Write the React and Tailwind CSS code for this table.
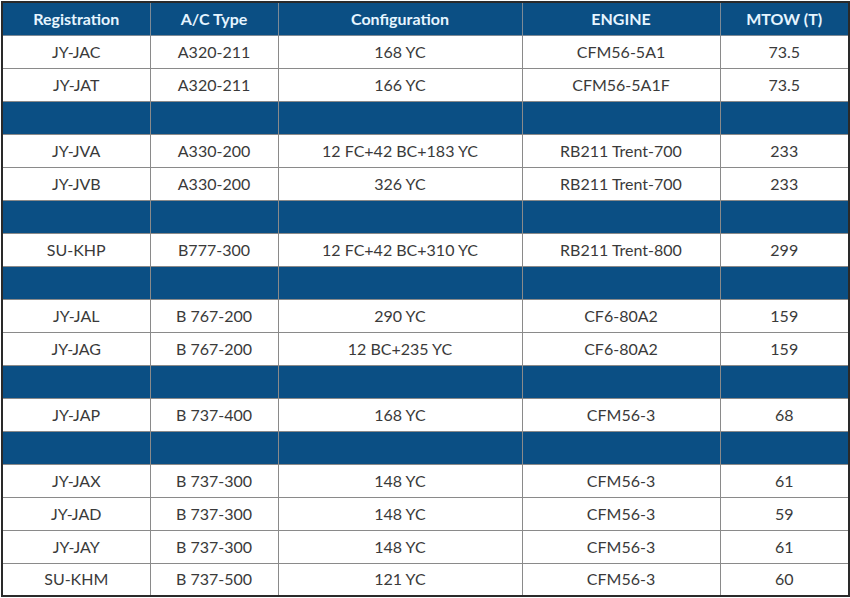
import React from "react";

const rows = [
  ["JY-JAC", "A320-211", "168 YC", "CFM56-5A1", "73.5"],
  ["JY-JAT", "A320-211", "166 YC", "CFM56-5A1F", "73.5"],
  null,
  ["JY-JVA", "A330-200", "12 FC+42 BC+183 YC", "RB211 Trent-700", "233"],
  ["JY-JVB", "A330-200", "326 YC", "RB211 Trent-700", "233"],
  null,
  ["SU-KHP", "B777-300", "12 FC+42 BC+310 YC", "RB211 Trent-800", "299"],
  null,
  ["JY-JAL", "B 767-200", "290 YC", "CF6-80A2", "159"],
  ["JY-JAG", "B 767-200", "12 BC+235 YC", "CF6-80A2", "159"],
  null,
  ["JY-JAP", "B 737-400", "168 YC", "CFM56-3", "68"],
  null,
  ["JY-JAX", "B 737-300", "148 YC", "CFM56-3", "61"],
  ["JY-JAD", "B 737-300", "148 YC", "CFM56-3", "59"],
  ["JY-JAY", "B 737-300", "148 YC", "CFM56-3", "61"],
  ["SU-KHM", "B 737-500", "121 YC", "CFM56-3", "60"],
];

const headers = ["Registration", "A/C Type", "Configuration", "ENGINE", "MTOW (T)"];
const widths = ["w-[148px]", "w-[128px]", "w-[244px]", "w-[198px]", "w-[129px]"];

export default function App() {
  return (
    <div className="w-[850px] h-[598px] bg-white pl-px pt-px" style={{ fontFamily: "Lato, 'Open Sans', sans-serif" }}>
      <table className="w-[848px] border-collapse table-fixed border-2 border-[#2a2a2a] text-[16px] text-[#3a3a3a]">
        <colgroup>
          {widths.map((w, i) => (
            <col key={i} className={w} />
          ))}
        </colgroup>
        <thead>
          <tr className="h-[33px] bg-[#0b4f84]">
            {headers.map((h, i) => (
              <th key={i} className="border border-[#7d8a96] font-bold text-[#e6f5ff] text-center p-0">
                {h}
              </th>
            ))}
          </tr>
        </thead>
        <tbody>
          {rows.map((r, i) =>
            r ? (
              <tr key={i} className="h-[33px]">
                {r.map((c, j) => (
                  <td key={j} className="border border-[#8a8a8a] text-center p-0">
                    {c}
                  </td>
                ))}
              </tr>
            ) : (
              <tr key={i} className="h-[33px] bg-[#0b4f84]">
                {headers.map((_, j) => (
                  <td key={j} className="border border-[#8a8a8a] p-0"></td>
                ))}
              </tr>
            )
          )}
        </tbody>
      </table>
    </div>
  );
}
